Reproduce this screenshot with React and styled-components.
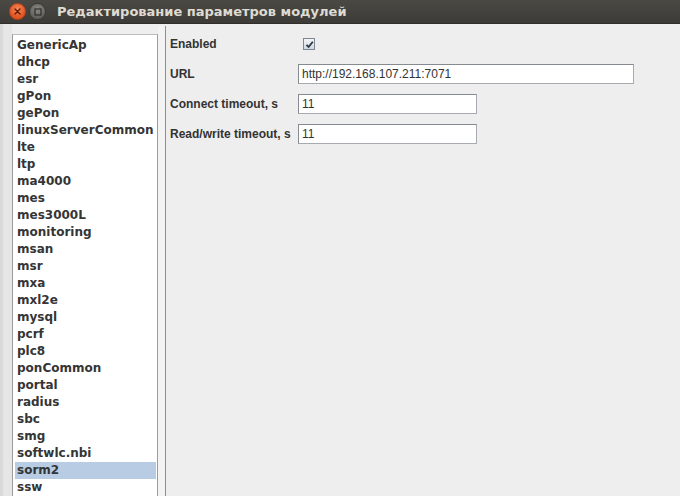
import React from 'react';
import styled, { createGlobalStyle } from 'styled-components';

const modules = [
  'GenericAp', 'dhcp', 'esr', 'gPon', 'gePon', 'linuxServerCommon', 'lte', 'ltp',
  'ma4000', 'mes', 'mes3000L', 'monitoring', 'msan', 'msr', 'mxa', 'mxl2e', 'mysql',
  'pcrf', 'plc8', 'ponCommon', 'portal', 'radius', 'sbc', 'smg', 'softwlc.nbi',
  'sorm2', 'ssw',
];

const GlobalStyle = createGlobalStyle`
  html, body {
    margin: 0;
    padding: 0;
    background: #eeeeee;
    overflow: hidden;
  }
`;

const Window = styled.div`
  width: 680px;
  height: 496px;
  display: flex;
  flex-direction: column;
  overflow: hidden;
  background: #eeeeee;
`;

const TitleBar = styled.div`
  height: 24px;
  flex: none;
  display: flex;
  align-items: center;
  padding-left: 9px;
  box-sizing: border-box;
  background: linear-gradient(#4a4944, #3c3b37);
  border-bottom: 1px solid #2f2e2b;
`;

const WinButton = styled.div`
  width: 17px;
  height: 17px;
  border-radius: 50%;
  margin-right: 3px;
  display: flex;
  align-items: center;
  justify-content: center;
  box-sizing: border-box;
  background: ${(p) => (p.close
    ? 'radial-gradient(circle at 50% 35%, #f5875a, #e0521d 70%)'
    : 'radial-gradient(circle at 50% 35%, #8a8984, #62615c 70%)')};
  border: 1px solid ${(p) => (p.close ? '#b8431a' : '#3a3935')};
`;

const Title = styled.div`
  margin-left: 8px;
  font-family: "DejaVu Sans", sans-serif;
  font-weight: bold;
  font-size: 13px;
  color: #dfdbd2;
  white-space: nowrap;
`;

const Body = styled.div`
  flex: 1;
  display: flex;
  min-height: 0;
`;

const LeftEdge = styled.div`
  width: 12px;
  flex: none;
  background: #e6e6e6;
  border-left: 3px solid #d9d9d9;
  box-sizing: border-box;
`;

const ListPane = styled.div`
  width: 146px;
  flex: none;
  margin-top: 10px;
  background: #ffffff;
  border: 1px solid #9c9c9c;
  border-top-color: #bdbdbd;
  border-bottom: none;
  box-sizing: border-box;
  padding: 2px 1px 0 2px;
  overflow: hidden;
`;

const ListItem = styled.div`
  height: 17px;
  line-height: 17px;
  padding-left: 2px;
  font-family: "DejaVu Sans", sans-serif;
  font-weight: bold;
  font-size: 12px;
  color: #353535;
  white-space: nowrap;
  background: ${(p) => (p.selected ? '#b8cde4' : 'transparent')};
`;

const Divider = styled.div`
  width: 8px;
  flex: none;
  margin-top: 2px;
  background: #f3f3f3;
  border-right: 1px solid #8e8e8e;
  box-sizing: border-box;
`;

const Form = styled.div`
  flex: 1;
  padding: 10px 0 0 4px;
  display: grid;
  grid-template-columns: 128px 1fr;
  grid-auto-rows: 20px;
  row-gap: 10px;
  align-content: start;
  align-items: center;
`;

const Label = styled.div`
  font-family: "Liberation Sans", Arial, sans-serif;
  font-weight: bold;
  font-size: 12px;
  color: #333333;
  white-space: nowrap;
`;

const CheckBox = styled.div`
  width: 12px;
  height: 12px;
  margin-left: 5px;
  box-sizing: border-box;
  border: 1px solid #7d8894;
  background: linear-gradient(#f4f6f8, #cfd8e2);
  display: flex;
  align-items: center;
  justify-content: center;
`;

const Field = styled.div`
  width: ${(p) => p.width}px;
  height: 20px;
  box-sizing: border-box;
  border: 1px solid #868b91;
  border-right-color: #a7abb0;
  border-bottom-color: #a7abb0;
  background: #ffffff;
  padding-left: 3px;
  display: flex;
  align-items: center;
  font-family: "Liberation Sans", Arial, sans-serif;
  font-size: 12px;
  color: #333333;
  white-space: nowrap;
`;

const CloseGlyph = () => (
  <svg width="7" height="7" viewBox="0 0 7 7">
    <path d="M1 1 L6 6 M6 1 L1 6" stroke="#5a1a06" strokeWidth="1.3" strokeLinecap="round" />
  </svg>
);

const MaxGlyph = () => (
  <svg width="8" height="8" viewBox="0 0 8 8">
    <rect x="1" y="1" width="6" height="6" fill="none" stroke="#2e2d2a" strokeWidth="1.2" />
  </svg>
);

const CheckGlyph = () => (
  <svg width="9" height="9" viewBox="0 0 9 9">
    <path d="M1.5 4.8 L3.6 7 L7.8 1.8" fill="none" stroke="#2b3540" strokeWidth="1.8" />
  </svg>
);

export default function App() {
  return (
    <>
      <GlobalStyle />
      <Window>
        <TitleBar>
          <WinButton close><CloseGlyph /></WinButton>
          <WinButton><MaxGlyph /></WinButton>
          <Title>Редактирование параметров модулей</Title>
        </TitleBar>
        <Body>
          <LeftEdge />
          <ListPane>
            {modules.map((m) => (
              <ListItem key={m} selected={m === 'sorm2'}>{m}</ListItem>
            ))}
          </ListPane>
          <Divider />
          <Form>
            <Label>Enabled</Label>
            <CheckBox><CheckGlyph /></CheckBox>
            <Label>URL</Label>
            <Field width={336}>http://192.168.107.211:7071</Field>
            <Label>Connect timeout, s</Label>
            <Field width={179}>11</Field>
            <Label>Read/write timeout, s</Label>
            <Field width={179}>11</Field>
          </Form>
        </Body>
      </Window>
    </>
  );
}
